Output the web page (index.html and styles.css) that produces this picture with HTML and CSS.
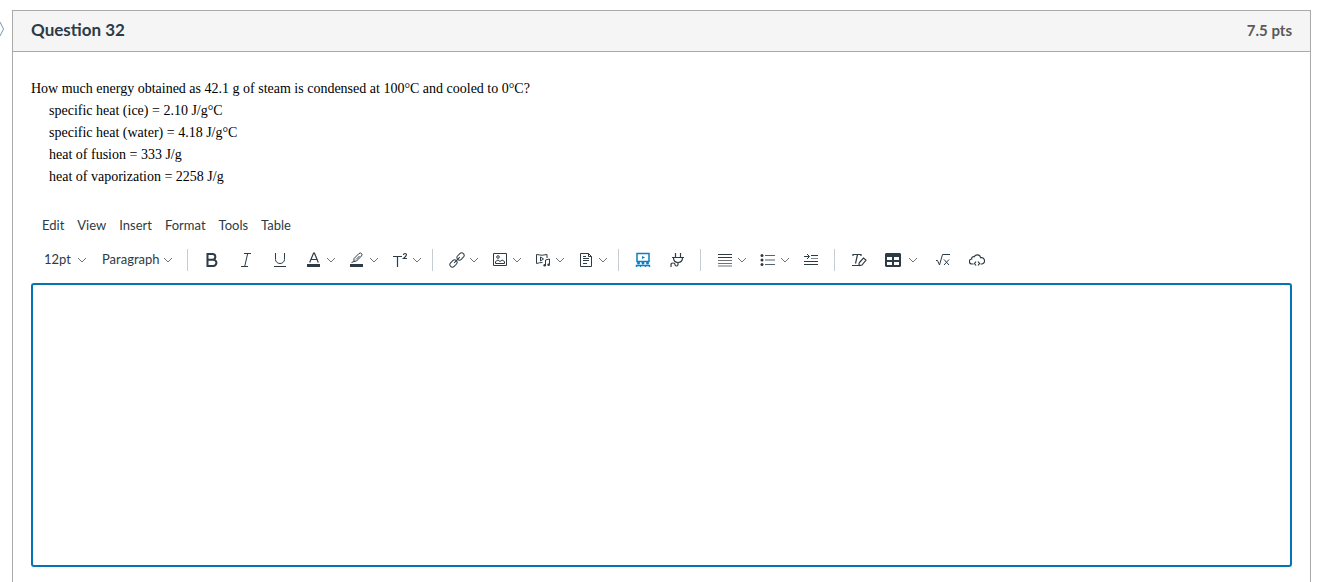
FILE: index.html
```html
<!DOCTYPE html>
<html lang="en">
<head>
    <meta charset="UTF-8">
    <meta name="viewport" content="width=device-width, initial-scale=1.0">
    <title>Question 32</title>
    <link rel="stylesheet" href="styles.css">
</head>
<body>
    <!-- Shared icon shapes -->
    <svg class="sprite" aria-hidden="true">
        <symbol id="chevron" viewBox="0 0 10 10"><path d="M1 3l4 4 4-4" fill="none" stroke="#6b7780"/></symbol>
    </svg>

    <main class="question">
        <svg class="flag" viewBox="0 0 5 16" aria-hidden="true"><path d="M0 1l3.500 7L0 15" fill="none" stroke="#7599b0"/></svg>

        <header class="question-header">
            <h1>Question 32</h1>
            <span class="points">7.5 pts</span>
        </header>

        <div class="question-body">
            <div class="question-text">
                <p>How much energy obtained as 42.1 g of steam is condensed at 100°C and cooled to 0°C?</p>
                <p class="given">specific heat (ice) = 2.10 J/g°C</p>
                <p class="given">specific heat (water) = 4.18 J/g°C</p>
                <p class="given">heat of fusion = 333 J/g</p>
                <p class="given">heat of vaporization = 2258 J/g</p>
            </div>

            <nav class="menubar">
                <button type="button">Edit</button>
                <button type="button">View</button>
                <button type="button">Insert</button>
                <button type="button">Format</button>
                <button type="button">Tools</button>
                <button type="button">Table</button>
            </nav>

            <div class="toolbar">
                <div class="group selects">
                    <div class="picker size">
                        <select aria-label="Font size"><option>12pt</option></select>
                        <svg class="chevron"><use href="#chevron"/></svg>
                    </div>
                    <div class="picker block">
                        <select aria-label="Block format"><option>Paragraph</option></select>
                        <svg class="chevron"><use href="#chevron"/></svg>
                    </div>
                </div>

                <div class="group">
                    <button type="button" class="tool" aria-label="Bold">
                        <svg class="icon" viewBox="0 0 16 16"><path d="M3.500 2h5a2.800 2.800 0 0 1 0 5.700h-5zM3.500 7.700h5.800a3 3 0 0 1 0 6.300H3.500z" stroke-width="2"/></svg>
                    </button>
                    <button type="button" class="tool" aria-label="Italic">
                        <svg class="icon" viewBox="0 0 16 16"><path d="M6 1.500h7M3 14.500h7M9.700 1.500l-3 13"/></svg>
                    </button>
                    <button type="button" class="tool" aria-label="Underline">
                        <svg class="icon" viewBox="0 0 16 16"><path d="M3.500 1v6.500a4.500 4 0 0 0 9 0V1M2 14.500h12"/></svg>
                    </button>
                    <button type="button" class="tool split" aria-label="Text color">
                        <svg class="icon" viewBox="0 0 16 16"><path d="M3.700 10.500L7.600 1h.8l3.900 9.500M5 7.500h6" stroke-width="1.200"/><path class="solid" d="M1 12h13v3H1z"/></svg>
                        <svg class="chevron"><use href="#chevron"/></svg>
                    </button>
                    <button type="button" class="tool split" aria-label="Highlight color">
                        <svg class="icon" viewBox="0 0 16 16"><path d="M5 6.500l5-5q1.500-1 2.500 0t0 2.500l-5 5-2.500.500zM5 9.500l-2.500 1M7 7.500l3.500-3.500"/><path class="solid" d="M1 12h13v3H1z"/></svg>
                        <svg class="chevron"><use href="#chevron"/></svg>
                    </button>
                    <button type="button" class="tool split" aria-label="Superscript">
                        <svg class="icon" viewBox="0 0 16 16"><path d="M1 4.500h9M5.500 4.500V15M11.500 3q0-1.500 1.500-1.500t1.500 1.300-3 3.700h3.500" stroke-width="1.200"/></svg>
                        <svg class="chevron"><use href="#chevron"/></svg>
                    </button>
                </div>

                <div class="group">
                    <button type="button" class="tool split" aria-label="Link">
                        <svg class="icon" viewBox="0 0 16 16"><g transform="rotate(-45 8 8)"><rect x="-1" y="5.500" width="8" height="5" rx="2.500"/><rect x="9" y="5.500" width="8" height="5" rx="2.500"/><path d="M4 8h8"/></g></svg>
                        <svg class="chevron"><use href="#chevron"/></svg>
                    </button>
                    <button type="button" class="tool split" aria-label="Image">
                        <svg class="icon" viewBox="0 0 16 16"><path d="M1.500 1.500h13v12h-13zM3.500 11.500V9.500L6 8l2 1.500L10 8l2.500 1.500v2z"/><circle cx="6" cy="5" r="1.300"/></svg>
                        <svg class="chevron"><use href="#chevron"/></svg>
                    </button>
                    <button type="button" class="tool split" aria-label="Media">
                        <svg class="icon" viewBox="0 0 16 16"><path d="M7.500 10.500q-3 0-6 1v-9q5.500 1.500 10.500 0V6M10.500 13V8l4-1v5.500"/><path d="M5.500 5l3 2-3 2z"/><circle class="solid" cx="9.700" cy="13.300" r="1.300"/><circle class="solid" cx="13.600" cy="12.700" r="1.300"/></svg>
                        <svg class="chevron"><use href="#chevron"/></svg>
                    </button>
                    <button type="button" class="tool split" aria-label="Document">
                        <svg class="icon" viewBox="0 0 16 16"><path d="M2.500 1.500h8l3 3v10h-11zM10.500 1.500v3h3M5 4.500h3M5 6.500h6M5 8.500h6M5 11.500h4"/></svg>
                        <svg class="chevron"><use href="#chevron"/></svg>
                    </button>
                </div>

                <div class="group">
                    <button type="button" class="tool studio" aria-label="Studio">
                        <svg class="icon" viewBox="0 0 16 16"><path d="M2 1.500h12v8H2z" stroke-width="1.500"/><path class="solid" d="M7 4l3 1.500L7 7z"/><circle class="solid" cx="3.500" cy="11" r="1.500"/><circle class="solid" cx="8" cy="11" r="1.500"/><circle class="solid" cx="12.500" cy="11" r="1.500"/><path d="M1.500 15v-1.500H5M5.500 15v-1.500h5V15M11 13.500h3.500V15" stroke-width="1.400"/></svg>
                    </button>
                    <button type="button" class="tool" aria-label="Apps">
                        <svg class="icon" viewBox="0 0 16 16"><path d="M6.500 1v4M11.500 1v4M3 5.500h12M4.500 5.500q0 5 4.500 5t4.500-5M9 10.500v2q0 1.500-1.500 1.500T6 12.500 4 11t-2 2v2" stroke-width="1.200"/></svg>
                    </button>
                </div>

                <div class="group">
                    <button type="button" class="tool split" aria-label="Align">
                        <svg class="icon" viewBox="0 0 16 16"><path d="M1 2.500h14M1 5.500h14"/><path d="M1 8.500h14M1 11.500h14M1 14h14" stroke-opacity=".7"/></svg>
                        <svg class="chevron"><use href="#chevron"/></svg>
                    </button>
                    <button type="button" class="tool split" aria-label="Bulleted list">
                        <svg class="icon" viewBox="0 0 16 16"><path d="M5 3.500h10M5 8h10M5 12.500h10" stroke-opacity=".8"/><circle class="solid" cx="2" cy="3.500" r="1.500"/><circle class="solid" cx="2" cy="8" r="1.500"/><circle class="solid" cx="2" cy="12.500" r="1.500"/></svg>
                        <svg class="chevron"><use href="#chevron"/></svg>
                    </button>
                    <button type="button" class="tool" aria-label="Increase indent">
                        <svg class="icon" viewBox="0 0 16 16"><path d="M8 3.500h7M1 9.500h14M1 12.500h14M1 4.500h5M4 2l2.500 2.500L4 7"/><path d="M8 6.500h7" stroke-opacity=".6"/></svg>
                    </button>
                </div>

                <div class="group">
                    <button type="button" class="tool clear" aria-label="Clear formatting">
                        <svg class="icon" viewBox="0 0 16 16"><path d="M2 4V2.500h8V4M6.500 2.500l-2 9M1 13.500h9M8.500 10.500l4-4.500 2.500 2-4 5-2.500.500q-1-1.500 0-3z" stroke-width="1.200"/></svg>
                    </button>
                    <button type="button" class="tool split table" aria-label="Table">
                        <svg class="icon" viewBox="0 0 16 16"><path class="solid" fill-rule="evenodd" d="M1 1h14l1 1v12l-1 1H1l-1-1V2zM2 5v3h5V5zM9 5v3h5V5zM2 10v3h5v-3zM9 10v3h5v-3z"/></svg>
                        <svg class="chevron"><use href="#chevron"/></svg>
                    </button>
                    <button type="button" class="tool" aria-label="Equation">
                        <svg class="icon" viewBox="0 0 16 16"><path d="M1 8.500h1.500l2 4.500 3-10.500H15M9 7.500l5 5.500M14 7.500L9 13"/></svg>
                    </button>
                    <button type="button" class="tool" aria-label="Embed">
                        <svg class="icon" viewBox="0 0 16 16"><path d="M4.500 12H3a2.500 2.500 0 0 1-.3-5 2 2 0 0 1 2.500-2.300 3.500 3.500 0 0 1 6.500 1A3.100 3.100 0 0 1 13 12h-1.500M7 9.500l-1.500 2L7 13.500M9 9.500l1.500 2-1.500 2" stroke-width="1.200"/></svg>
                    </button>
                </div>
            </div>

            <textarea class="answer" aria-label="Answer"></textarea>
        </div>
    </main>
</body>
</html>
```
FILE: styles.css
```css
body {
    margin: 0;
    height: 100vh;
    overflow: hidden;
    background-color: #fff;
    color: #2d3b45;
    font-family: Lato, sans-serif;
}
.sprite {
    display: none;
}
.question {
    position: relative;
    margin: 10px 19px 0 12px;
    border: 1px solid #aaa;
}
.flag {
    position: absolute;
    left: -13px;
    top: 10px;
    width: 5px;
    height: 16px;
}
.question-header {
    display: flex;
    justify-content: space-between;
    padding: 8px 18px;
    line-height: 24px;
    background-color: #f5f5f5;
    border-bottom: 1px solid #aaa;
}
.question-header h1 {
    margin: 0;
    font-size: 17px;
    font-weight: 700;
    line-height: 22px;
}
.points {
    font-size: 15px;
    font-weight: 700;
    line-height: 22px;
    color: #595959;
}
.question-header {
    height: 24px;
}
.question-body {
    padding: 26px 18px 16px;
}
.question-text {
    color: #000;
    font-family: "Liberation Serif", serif;
    font-size: 14px;
    line-height: 22px;
}
.question-text p {
    margin: 0;
}
.question-text .given {
    padding-left: 18px;
}
button,
select {
    margin: 0;
    padding: 0;
    border: 0;
    background: none;
    color: inherit;
    font-family: inherit;
    font-size: 13px;
}
.menubar {
    display: flex;
    gap: 13px;
    margin-top: 27px;
    padding-left: 11px;
}
.menubar button {
    height: 20px;
}
.toolbar {
    display: flex;
    height: 34px;
    margin: 8px 0 6px;
}
.group {
    display: flex;
    align-items: center;
    padding: 0 6px 0 7px;
}
.group + .group::before {
    content: "";
    width: 1px;
    height: 22px;
    margin-right: 7px;
    margin-left: -7px;
    background-color: #c7cdd1;
}
.selects {
    gap: 15px;
    padding: 0 14px 0 13px;
}
.picker {
    display: flex;
    align-items: center;
}
.picker select {
    flex: 1;
    padding-bottom: 2px;
    appearance: none;
}
.size {
    width: 43px;
}
.block {
    width: 71px;
}
.tool {
    display: flex;
    align-items: center;
    height: 34px;
    padding: 0 9px;
}
.split {
    gap: 4px;
    padding-right: 4px;
}
.table {
    gap: 7px;
    padding-right: 8px;
}
.icon {
    width: 16px;
    height: 16px;
    fill: none;
    stroke: #2d3b45;
}
.icon .solid {
    fill: #2d3b45;
    stroke: none;
}
.studio .icon {
    stroke: #0b7fc4;
}
.studio .icon .solid {
    fill: #0b7fc4;
}
.chevron {
    width: 10px;
    height: 10px;
}
.answer {
    display: block;
    box-sizing: border-box;
    width: 100%;
    height: 284px;
    padding: 10px;
    border: 2px solid #0374b5;
    border-radius: 3px;
    outline: none;
    resize: none;
    font-family: inherit;
    font-size: 16px;
}
```
